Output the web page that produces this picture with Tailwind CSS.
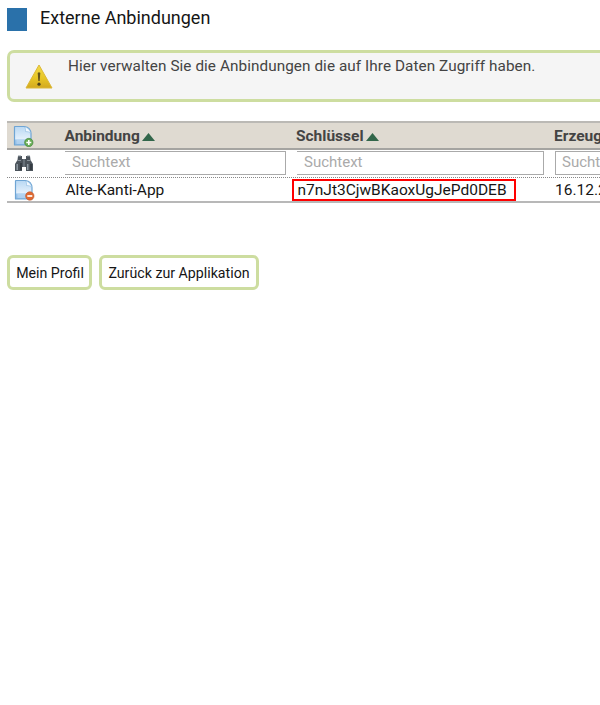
<!DOCTYPE html>
<html lang="de">
<head>
<meta charset="utf-8">
<title>Externe Anbindungen</title>
<script src="https://cdn.jsdelivr.net/npm/@tailwindcss/browser@4"></script>
</head>
<body class="bg-white overflow-hidden h-[705px] w-[600px] font-['Roboto',sans-serif] text-[#161616]">
<svg class="absolute w-0 h-0" aria-hidden="true">
  <defs>
    <linearGradient id="paper" x1="0" y1="0" x2="0" y2="1"><stop offset="0" stop-color="#b9d8f3"/><stop offset=".65" stop-color="#e2effb"/><stop offset=".75" stop-color="#9cc6ec"/><stop offset="1" stop-color="#8fbce6"/></linearGradient>
    <linearGradient id="warn" x1="0" y1="0" x2="0" y2="1"><stop offset="0" stop-color="#f3dc48"/><stop offset=".6" stop-color="#e6c425"/><stop offset="1" stop-color="#d3a91f"/></linearGradient>
    <symbol id="doc" viewBox="0 0 22 22">
      <path d="M3 1.500h9.500q6 .8 6.500 7v11.500h-16.500v-18z" fill="url(#paper)" stroke="#6fa5d4" stroke-width="1.200" stroke-linejoin="round"/>
      <path d="M12.500 2q1.500 1.500 1 4.500q3.500-.3 5 2q-.4-5.500-6-6.500z" fill="#f2f8fe" stroke="#8fbce2" stroke-width=".6"/>
      <path d="M4.500 16h9M4.500 18h9" stroke="#d4e7f8" stroke-width=".8"/>
    </symbol>
  </defs>
</svg>
<header class="flex items-start h-[50px] pl-[7px] pt-2">
  <div class="w-5 h-[23px] bg-[#2a71aa]"></div>
  <h1 class="ml-[13px] text-[18px] leading-5">Externe Anbindungen</h1>
</header>
<section class="ml-[7px] w-[593px] h-[52px] border-[3px] border-r-0 border-[#cddda0] rounded-l-[7px] bg-[#f5f5f5] flex items-start">
  <svg class="ml-[15px] mt-[10px] shrink-0" width="28" height="27" viewBox="0 0 28 27">
    <path d="M14 2 27 25H1z" fill="url(#warn)" stroke="#dcb838" stroke-linejoin="round"/>
    <path d="M12.700 10q1.300-1.600 2.600 0l-.6 8h-1.400z" fill="#65551b"/><circle cx="14" cy="21.200" r="1.600" fill="#4d431d"/>
  </svg>
  <p class="ml-[15px] mt-[3px] text-[15.300px] leading-5 text-[#444] whitespace-nowrap tracking-[0.07px]">Hier verwalten Sie die Anbindungen die auf Ihre Daten Zugriff haben.</p>
</section>
<main class="ml-[7px] mt-[19px] w-[593px] overflow-hidden">
  <div class="grid grid-cols-[57.5px_231.5px_258px_46px] h-[29px] border-t-2 border-b-2 border-t-[#bbb9b5] border-b-[#a5a4a1] bg-[#dfdad1] text-[15.500px] leading-[26px] font-bold text-[#444] whitespace-nowrap">
    <svg class="ml-[5px] mt-[2px]" width="22" height="22" viewBox="0 0 22 22"><use href="#doc"/><circle cx="16.800" cy="17.500" r="4.200" fill="#68ad55" stroke="#397d35" stroke-width=".6"/><path d="M14.300 17.500h5M16.800 15v5" stroke="#fff" stroke-width="1.600"/></svg>
    <div class="flex"><span>Anbindung</span><svg class="ml-[2px] mt-[9px]" width="13" height="9"><path d="M6.500 1 13 9H0z" fill="#32664a"/></svg></div>
    <div class="flex"><span>Schlüssel</span><svg class="ml-[3px] mt-[9px]" width="13" height="9"><path d="M6.500 1 13 9H0z" fill="#32664a"/></svg></div>
    <div><span>Erzeugt</span></div>
  </div>
  <div class="grid grid-cols-[58px_232px_258px_45px] h-7 border-b border-dotted border-[#888] text-[15px] leading-[21px] text-[#aaa]">
    <svg class="ml-[7px] mt-[4px]" width="20" height="18" viewBox="0 0 20 18">
      <path d="M4 2h4v3h4V2h4l.5 4L19 10v7h-7v-4H8v4H1v-7l2.500-4z" fill="#4b535b"/>
      <path d="M4 2h3M13 2h3M3.500 6.500H7M13 6.500h3.500" stroke="#8a939a"/><path d="M3.200 10v6M13.700 10v6" stroke="#909ba4" stroke-width="1.500"/><path d="M10 5v8" stroke="#848f98"/><path d="M7 9v7M17 10v6" stroke="#20262d"/>
    </svg>
    <div class="w-[221px] h-[24px] mt-px border border-l-0 border-[#aaa] pl-[7px]">Suchtext</div>
    <div class="w-[247px] h-[24px] mt-px border border-l-0 border-[#aaa] pl-[7px]">Suchtext</div>
    <div class="h-[24px] mt-px border border-r-0 border-[#aaa] pl-[6px]">Suchtext</div>
  </div>
  <div class="grid grid-cols-[58px_227px_263px_45px] h-[25px] border-b-2 border-[#b8b8b8] text-[15.500px] leading-[24px] whitespace-nowrap">
    <svg class="ml-[6px] mt-px" width="22" height="22" viewBox="0 0 22 22"><use href="#doc"/><circle cx="16.800" cy="17" r="4.200" fill="#df6931" stroke="#bd572a" stroke-width=".6"/><path d="M14.300 17h5" stroke="#fff" stroke-width="1.700"/></svg>
    <span class="pl-[0.5px]">Alte-Kanti-App</span>
    <span class="w-[224px] h-[22px] mt-px border-2 border-[#ff0000] pl-[3.500px] leading-[18px]">n7nJt3CjwBKaoxUgJePd0DEB</span>
    <span>16.12.2020</span>
  </div>
</main>
<nav class="flex gap-[7px] ml-[7px] mt-[52px] text-[14.200px] leading-[30px] whitespace-nowrap">
  <button class="w-[85px] h-[35px] border-[3px] border-[#cddda0] rounded-[6px] pl-px">Mein Profil</button>
  <button class="w-[160px] h-[35px] border-[3px] border-[#cddda0] rounded-[6px]">Zurück zur Applikation</button>
</nav>
</body>
</html>
